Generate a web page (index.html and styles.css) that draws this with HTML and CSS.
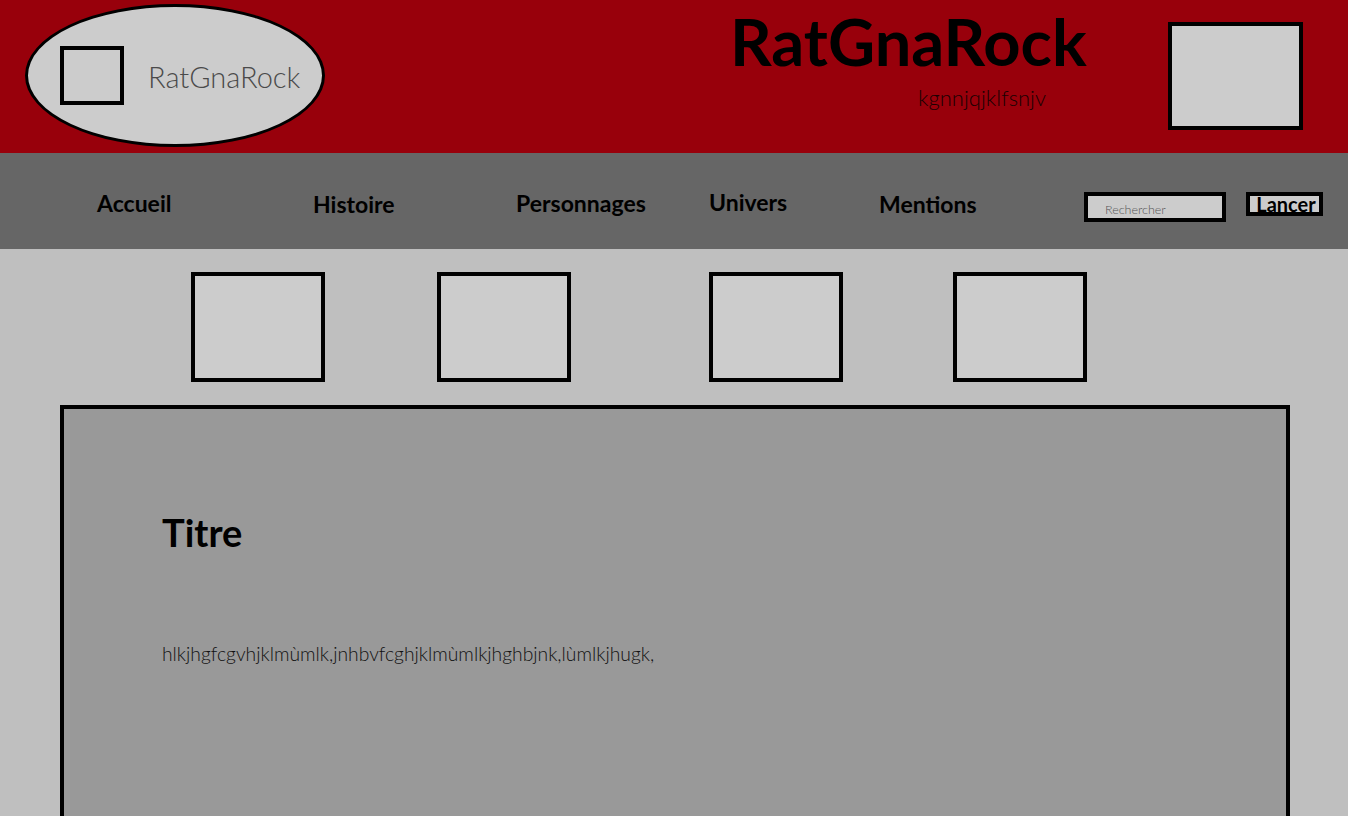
FILE: index.html
```html
<!DOCTYPE html>
<html lang="fr">
<head>
<meta charset="utf-8">
<title>RatGnaRock</title>
<link rel="stylesheet" href="styles.css">
</head>
<body>
<header class="site-header">
  <div class="logo">
    <div class="logo-square"></div>
    <span class="logo-text">RatGnaRock</span>
  </div>
  <div class="brand">
    <h1 class="brand-title">RatGnaRock</h1>
    <p class="brand-sub">kgnnjqjklfsnjv</p>
  </div>
  <div class="header-square"></div>
</header>
<nav class="main-nav">
  <a class="nav-link" href="#">Accueil</a>
  <a class="nav-link nav-low" href="#">Histoire</a>
  <a class="nav-link" href="#">Personnages</a>
  <a class="nav-link nav-high" href="#">Univers</a>
  <a class="nav-link nav-low" href="#">Mentions</a>
  <form class="search">
    <input class="search-input" type="text" placeholder="Rechercher">
    <button class="search-btn" type="button">Lancer</button>
  </form>
</nav>
<main class="main">
  <div class="thumbs">
    <div class="thumb thumb-1"></div>
    <div class="thumb thumb-2"></div>
    <div class="thumb thumb-3"></div>
    <div class="thumb thumb-4"></div>
  </div>
  <section class="content">
    <h2 class="content-title">Titre</h2>
    <p class="content-text">hlkjhgfcgvhjklmùmlk,jnhbvfcghjklmùmlkjhghbjnk,lùmlkjhugk,</p>
  </section>
</main>
</body>
</html>
```
FILE: styles.css
```css
* { box-sizing: border-box; }
html, body { margin: 0; padding: 0; }
body {
  font-family: Lato, "Noto Sans", sans-serif;
  background: #bfbfbf;
  color: #000;
  overflow: hidden;
}

/* Header */
.site-header {
  display: flex;
  align-items: flex-start;
  height: 153px;
  background: #98000b;
}
.logo {
  margin: 4px 0 0 25px;
  width: 300px;
  height: 143px;
  border: 3px solid #000;
  border-radius: 50%;
  background: #cccccc;
  display: flex;
  align-items: center;
  padding-left: 32px;
  gap: 24px;
  flex: none;
}
.logo-square {
  width: 64px;
  height: 59px;
  border: 4px solid #000;
  flex: none;
}
.logo-text {
  font-family: "Lato Light", Lato, sans-serif;
  font-weight: 300;
  font-size: 29px;
  color: #4a4a4a;
  margin-top: 2px;
}
.brand {
  margin-left: 405px;
  display: flex;
  flex-direction: column;
}
.brand-title {
  margin: 2px 0 0;
  font-size: 65px;
  font-weight: 700;
  line-height: 1.2;
}
.brand-sub {
  margin: 5px 0 0 188px;
  font-family: "Lato Light", Lato, sans-serif;
  font-size: 22px;
  font-weight: 300;
  line-height: 1.2;
  color: #1a0002;
}
.header-square {
  margin: 22px 45px 0 auto;
  width: 135px;
  height: 108px;
  border: 4px solid #000;
  background: #cccccc;
  flex: none;
}

/* Nav */
.main-nav {
  display: grid;
  grid-template-columns: 216px 203px 193px 170px 205px auto;
  align-items: start;
  height: 96px;
  padding-left: 97px;
  background: #666666;
}
.nav-link {
  margin-top: 37px;
  font-size: 23px;
  font-weight: 700;
  line-height: 1.2;
  color: #000;
  text-decoration: none;
  justify-self: start;
}
.nav-low { margin-top: 38px; }
.nav-high { margin-top: 36px; }
.search {
  display: flex;
  align-items: flex-start;
  margin-top: 39px;
}
.search-input {
  width: 142px;
  height: 30px;
  border: 4px solid #000;
  background: #cccccc;
  padding: 5px 0 0 17px;
  font-family: "Lato Light", Lato, sans-serif;
  font-weight: 300;
  font-size: 12.5px;
  color: #000;
  outline: none;
}
.search-input::placeholder { color: #555; }
.search-btn {
  margin-left: 20px;
  width: 77px;
  height: 24px;
  border: 4px solid #000;
  background: #cccccc;
  padding: 0 0 0 3px;
  font-family: Lato, sans-serif;
  font-weight: 700;
  font-size: 20px;
  line-height: 8px;
  color: #000;
}

/* Main */
.thumbs {
  display: flex;
  padding-top: 23px;
}
.thumb {
  width: 134px;
  height: 110px;
  border: 4px solid #000;
  background: #cccccc;
  flex: none;
}
.thumb-1 { margin-left: 191px; }
.thumb-2 { margin-left: 112px; }
.thumb-3 { margin-left: 138px; }
.thumb-4 { margin-left: 110px; }

.content {
  margin: 23px 0 0 60px;
  width: 1230px;
  min-height: 500px;
  border: 4px solid #000;
  background: #999999;
  padding: 101px 0 0 98px;
}
.content-title {
  margin: 0;
  font-size: 38px;
  font-weight: 700;
  line-height: 1.2;
}
.content-text {
  margin: 86px 0 0;
  font-family: "Lato Light", Lato, sans-serif;
  font-size: 19.3px;
  font-weight: 300;
  line-height: 1.2;
  color: #111;
}
```
